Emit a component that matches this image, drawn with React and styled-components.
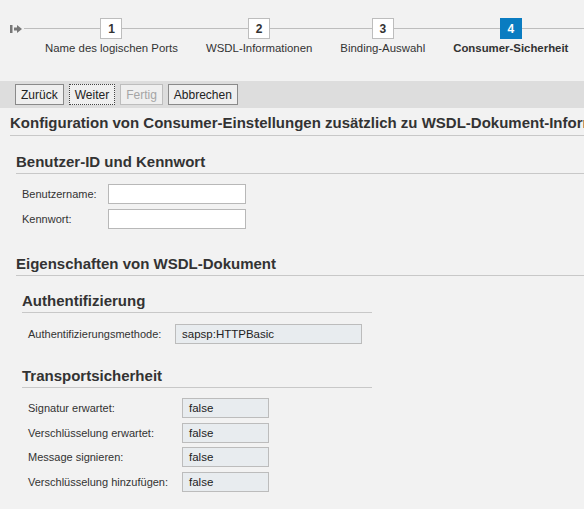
import styled, { createGlobalStyle } from 'styled-components'

const GlobalStyle = createGlobalStyle`
  body {
    margin: 0;
    background: #f2f2f2;
    font-family: "Liberation Sans", Arial, sans-serif;
    color: #333;
  }
`

const Page = styled.div`
  width: 584px;
  height: 509px;
  overflow: hidden;
  background: #f2f2f2;
`

const Roadmap = styled.div`
  display: flex;
  padding-top: 18px;
`

const StartIcon = styled.div`
  width: 12px;
  height: 21px;
  margin-left: 10px;
  display: flex;
  align-items: center;
`

const Track = styled.div`
  position: relative;
  flex: 1;
  display: flex;
  margin-left: 2px;
  padding-left: 7px;

  &::before {
    content: "";
    position: absolute;
    left: 0;
    right: 0;
    top: 10px;
    height: 1px;
    background: #bdbdbd;
  }
`

const Step = styled.div`
  position: relative;
  display: flex;
  flex-direction: column;
  align-items: center;
  padding: 0 14px;
`

const StepBox = styled.div`
  box-sizing: border-box;
  width: 22px;
  height: 21px;
  display: flex;
  align-items: center;
  justify-content: center;
  font-size: 12px;
  font-weight: bold;
  background: ${p => (p.$active ? '#0a7cc1' : '#fff')};
  color: ${p => (p.$active ? '#fff' : '#333')};
  border: 1px solid ${p => (p.$active ? '#0a7cc1' : '#bdbdbd')};
`

const StepLabel = styled.div`
  margin-top: 2px;
  font-size: 11.4px;
  line-height: 14px;
  white-space: nowrap;
  font-weight: ${p => (p.$active ? 'bold' : 'normal')};
`

const Toolbar = styled.div`
  display: flex;
  gap: 5px;
  margin-top: 26px;
  height: 27px;
  align-items: center;
  padding-left: 15px;
  background: #dddddd;
`

const Button = styled.button`
  box-sizing: border-box;
  height: 21px;
  padding: 0 5px;
  font-family: inherit;
  font-size: 12px;
  background: #efefef;
  color: ${p => (p.$disabled ? '#a5a5a5' : '#222')};
  border: 1px ${p => (p.$focused ? 'dotted' : 'solid')};
  border-color: ${p => (p.$focused ? '#444' : p.$disabled ? '#bdbdbd' : '#8a8a8a')};
  border-radius: 0;
`

const PageTitle = styled.h1`
  margin: 6px 0 0 10px;
  padding-bottom: 3px;
  font-size: 15px;
  line-height: 18px;
  font-weight: bold;
  white-space: nowrap;
  overflow: hidden;
  border-bottom: 1px solid #c8c8c8;
`

const SectionTitle = styled.h2`
  margin: ${p => p.$top}px 0 0 ${p => p.$indent}px;
  width: ${p => (p.$width ? `${p.$width}px` : 'auto')};
  padding-bottom: 2px;
  font-size: 15px;
  line-height: 18px;
  font-weight: bold;
  white-space: nowrap;
  border-bottom: 1px solid #c8c8c8;
`

const Form = styled.div`
  display: flex;
  flex-direction: column;
  gap: ${p => p.$gap}px;
  margin: ${p => p.$top}px 0 0 ${p => p.$indent}px;
`

const Row = styled.div`
  display: flex;
  align-items: center;
`

const Label = styled.label`
  width: ${p => p.$width}px;
  font-size: 11px;
  color: #333;
`

const Input = styled.input`
  box-sizing: border-box;
  width: 138px;
  height: 20px;
  margin: 0;
  background: #fff;
  border: 1px solid #b8b8b8;
  outline: none;
`

const ReadOnly = styled.div`
  box-sizing: border-box;
  width: ${p => p.$width}px;
  height: 20px;
  padding: 0 6px;
  display: flex;
  align-items: center;
  font-size: 11.5px;
  color: #222;
  background: #e8ecef;
  border: 1px solid #bcbcbc;
`

const steps = [
  { n: 1, label: 'Name des logischen Ports' },
  { n: 2, label: 'WSDL-Informationen' },
  { n: 3, label: 'Binding-Auswahl' },
  { n: 4, label: 'Consumer-Sicherheit', active: true },
]

const transport = [
  'Signatur erwartet:',
  'Verschlüsselung erwartet:',
  'Message signieren:',
  'Verschlüsselung hinzufügen:',
]

export default function App() {
  return (
    <Page>
      <GlobalStyle />
      <Roadmap>
        <StartIcon>
          <svg width="12" height="10" viewBox="0 0 12 10">
            <rect x="0" y="1" width="2.5" height="8" fill="#777" />
            <path d="M4 3.5h3V1l5 4-5 4V6.5H4z" fill="#777" />
          </svg>
        </StartIcon>
        <Track>
          {steps.map(s => (
            <Step key={s.n}>
              <StepBox $active={s.active}>{s.n}</StepBox>
              <StepLabel $active={s.active}>{s.label}</StepLabel>
            </Step>
          ))}
        </Track>
      </Roadmap>

      <Toolbar>
        <Button>Zurück</Button>
        <Button $focused>Weiter</Button>
        <Button $disabled>Fertig</Button>
        <Button>Abbrechen</Button>
      </Toolbar>

      <PageTitle>Konfiguration von Consumer-Einstellungen zusätzlich zu WSDL-Dokument-Informationen</PageTitle>

      <SectionTitle $top={17} $indent={16}>Benutzer-ID und Kennwort</SectionTitle>
      <Form $top={10} $indent={22} $gap={5}>
        <Row>
          <Label $width={86}>Benutzername:</Label>
          <Input type="text" />
        </Row>
        <Row>
          <Label $width={86}>Kennwort:</Label>
          <Input type="password" />
        </Row>
      </Form>

      <SectionTitle $top={26} $indent={16}>Eigenschaften von WSDL-Dokument</SectionTitle>

      <SectionTitle $top={16} $indent={22} $width={350}>Authentifizierung</SectionTitle>
      <Form $top={11} $indent={28} $gap={5}>
        <Row>
          <Label $width={147}>Authentifizierungsmethode:</Label>
          <ReadOnly $width={187}>sapsp:HTTPBasic</ReadOnly>
        </Row>
      </Form>

      <SectionTitle $top={23} $indent={22} $width={350}>Transportsicherheit</SectionTitle>
      <Form $top={10} $indent={28} $gap={4.6}>
        {transport.map(t => (
          <Row key={t}>
            <Label $width={154}>{t}</Label>
            <ReadOnly $width={87}>false</ReadOnly>
          </Row>
        ))}
      </Form>
    </Page>
  )
}
